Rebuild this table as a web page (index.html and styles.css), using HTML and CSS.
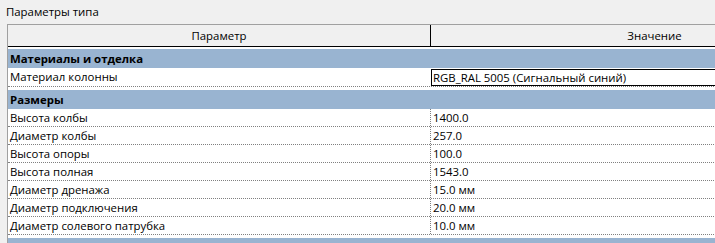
FILE: index.html
```html
<!DOCTYPE html>
<html lang="ru">
<head>
  <meta charset="UTF-8">
  <title>Параметры типа</title>
  <link rel="stylesheet" href="styles.css">
</head>
<body>

  <div class="caption">Параметры типа</div>

  <div class="grid">
    <div class="head">
      <div class="col-name">Параметр</div>
      <div class="col-value">Значение</div>
    </div>

    <div class="group">Материалы и отделка</div>
    <div class="row tall">
      <div class="name">Материал колонны</div>
      <div class="value selected">RGB_RAL 5005 (Сигнальный синий)</div>
    </div>

    <div class="group">Размеры</div>
    <div class="row">
      <div class="name">Высота колбы</div>
      <div class="value">1400.0</div>
    </div>
    <div class="row">
      <div class="name">Диаметр колбы</div>
      <div class="value">257.0</div>
    </div>
    <div class="row">
      <div class="name">Высота опоры</div>
      <div class="value">100.0</div>
    </div>
    <div class="row">
      <div class="name">Высота полная</div>
      <div class="value">1543.0</div>
    </div>
    <div class="row">
      <div class="name">Диаметр дренажа</div>
      <div class="value">15.0 мм</div>
    </div>
    <div class="row">
      <div class="name">Диаметр подключения</div>
      <div class="value">20.0 мм</div>
    </div>
    <div class="row">
      <div class="name">Диаметр солевого патрубка</div>
      <div class="value">10.0 мм</div>
    </div>

    <div class="group">Механизмы</div>
  </div>

</body>
</html>
```

FILE: styles.css
```css
body {
  margin: 0;
  background: #f0f0f0;
  font-family: 'Open Sans', 'Noto Sans', sans-serif;
  font-size: 11.4px;
  color: #000;
  overflow: hidden;
  height: 243px;
}

.caption {
  padding: 4px 0 0 6px;
  height: 20px;
  line-height: 16px;
}

.grid {
  margin-left: 7px;
  width: 870px;
  border-left: 1px solid #a0a0a0;
  border-top: 1px solid #a0a0a0;
  background: #fff;
}

.head {
  display: flex;
  height: 21px;
  line-height: 21px;
  background: #f0f0f0;
  border-bottom: 1px solid #000;
  margin-bottom: 2px;
}

.head .col-name {
  width: 422px;
  text-align: center;
  border-right: 1px solid #000;
}

.head .col-value {
  flex: 1;
  text-align: center;
}

.group {
  height: 19px;
  line-height: 19px;
  padding-left: 2px;
  background: #99b4d1;
  font-weight: bold;
}

.row + .group {
  margin-top: 3px;
}

.row {
  display: flex;
  height: 17px;
  line-height: 17px;
  border-bottom: 1px dotted #808080;
}

.row.tall {
  height: 18px;
  line-height: 18px;
}

.row .name {
  width: 420px;
  padding-left: 2px;
}

.row .value {
  flex: 1;
  padding-left: 2px;
  border-left: 1px dotted #808080;
}

.row .value.selected {
  height: 15px;
  line-height: 15px;
  margin: 1px 0 0 1px;
  padding-left: 1px;
  border: 1px solid #000;
}
```
